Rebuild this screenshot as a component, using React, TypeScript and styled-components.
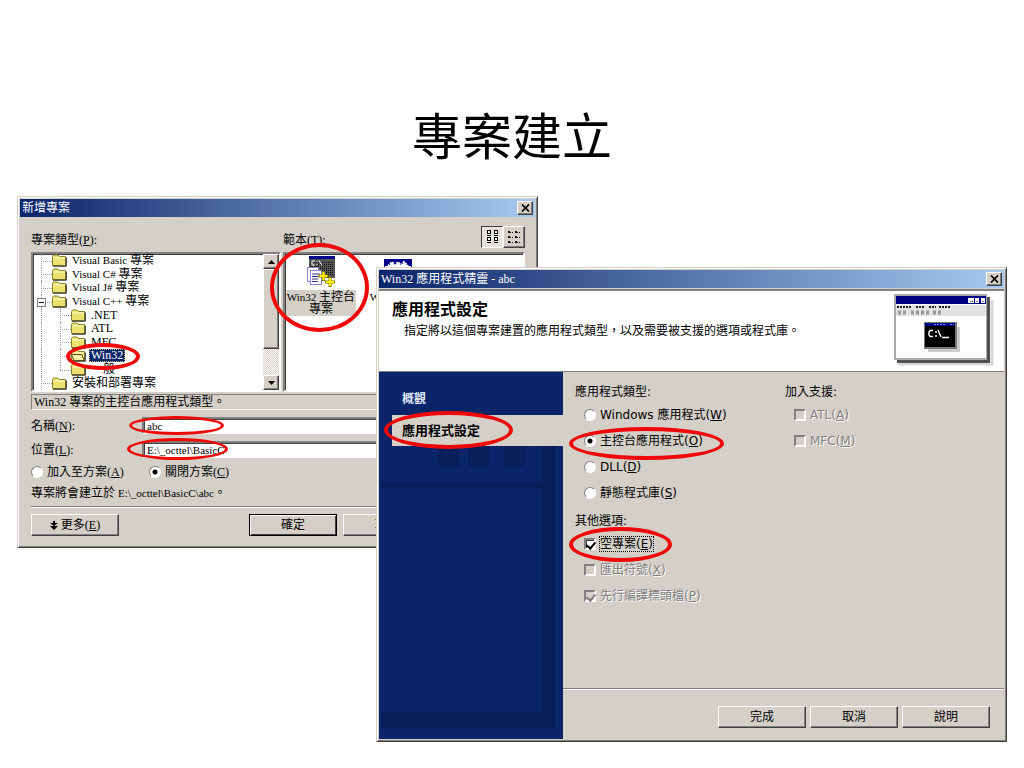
import React from "react";
import styled, { createGlobalStyle, css } from "styled-components";

const face = "#d4d0c8";
const navy = "#0a246a";
const shadow = "#808080";
const dark = "#404040";
const red = "#f00808";

const serif = `"Liberation Serif", "Noto Sans CJK TC", serif`;
const sans = `"DejaVu Sans", "Noto Sans CJK TC", sans-serif`;
const cjk = `"Noto Sans CJK TC", sans-serif`;

const GlobalStyle = createGlobalStyle`
  * { box-sizing: border-box; }
  body { margin: 0; background: #fff; color: #000; }
  button, input { font: inherit; color: inherit; margin: 0; }
  ul { list-style: none; margin: 0; padding: 0; }
  fieldset { border: 0; margin: 0; padding: 0; min-width: 0; }
  legend { padding: 0; }
`;

const raised = css`
  border: 1px solid;
  border-color: #fff ${dark} ${dark} #fff;
  box-shadow: inset -1px -1px 0 ${shadow};
`;

const sunken = css`
  border: 2px solid;
  border-color: ${shadow} #fff #fff ${shadow};
  box-shadow: inset 1px 1px 0 ${dark};
`;

const Slide = styled.main`
  position: relative;
  min-height: 768px;
  overflow: hidden;
`;

const SlideTitle = styled.h1`
  margin: 0;
  padding-top: 103px;
  font: 400 50px/60px ${cjk};
  text-align: center;
`;

const Window = styled.section<{ $latin: string }>`
  position: absolute;
  background: ${face};
  border: 1px solid;
  border-color: ${face} ${dark} ${dark} ${face};
  box-shadow: inset 1px 1px 0 #fff, inset -1px -1px 0 ${shadow};
  padding: 2px;
  font: 12px/14px ${(p) => p.$latin};
`;

const ProjectWindow = styled(Window)`
  top: 196px;
  left: 17px;
  width: calc(50% + 9px);
`;

const WizardWindow = styled(Window)`
  top: 267px;
  left: calc(50% - 136px);
  right: 17px;
`;

const TitleBar = styled.header`
  display: flex;
  align-items: center;
  justify-content: space-between;
  height: 18px;
  padding: 0 2px;
  background: linear-gradient(to right, ${navy}, #a6caf0);
  color: #fff;
  font-family: ${serif};
`;

const TitleText = styled.h2`
  margin: 0;
  font-size: 12px;
  font-weight: 400;
`;

const CloseButton = styled.button`
  ${raised}
  display: grid;
  place-items: center;
  width: 16px;
  height: 14px;
  padding: 0;
  background: ${face};
  color: #000;
`;

const Ring = styled.span<{ $box: [number, number, number, number]; $thick?: number }>`
  position: absolute;
  z-index: 2;
  left: ${(p) => p.$box[0]}px;
  top: ${(p) => p.$box[1]}px;
  width: ${(p) => p.$box[2]}px;
  height: ${(p) => p.$box[3]}px;
  border: ${(p) => p.$thick ?? 3}px solid ${red};
  border-radius: 50%;
  pointer-events: none;
`;

const Latin = styled.span`
  font-size: 11px;
`;

const PushButton = styled.button<{ $primary?: boolean }>`
  ${raised}
  width: 88px;
  height: 22px;
  padding: 0;
  background: ${face};
  white-space: nowrap;
  ${(p) => p.$primary && css`border-color: #000; box-shadow: inset 1px 1px 0 #fff, inset -1px -1px 0 ${dark};`}
`;

const Divider = styled.hr`
  width: 100%;
  height: 2px;
  margin: 0;
  border: 0;
  border-top: 1px solid ${shadow};
  border-bottom: 1px solid #fff;
`;

/* New project dialog */

const ProjectBody = styled.div`
  display: flex;
  flex-direction: column;
  padding: 9px 10px 9px 11px;
`;

const Panes = styled.div`
  display: grid;
  grid-template-columns: 250px 1fr;
  grid-template-rows: 22px 140px;
  gap: 4px 2px;
`;

const PaneLabel = styled.div`
  display: flex;
  align-items: center;
  justify-content: space-between;
  padding-top: 5px;
`;

const ViewButtons = styled.div`
  display: flex;
  margin-top: -5px;
`;

const ViewButton = styled.button<{ $pressed?: boolean }>`
  ${raised}
  display: grid;
  place-items: center;
  width: 22px;
  height: 22px;
  padding: 0;
  background: ${face};
  ${(p) => p.$pressed && css`background: #e6e3de; border-color: ${dark} #fff #fff ${dark}; box-shadow: none;`}
`;

const ListBox = styled.div`
  ${sunken}
  display: flex;
  background: #fff;
`;

const Tree = styled.ul`
  display: grid;
  flex: 1;
  grid-auto-rows: 1fr;
`;

const TreeRow = styled.li`
  position: relative;
  display: flex;
  align-items: center;
  min-height: 0;
  font-family: ${serif};
  line-height: 13px;
`;

const Guide = styled.span<{ $branch?: boolean; $half?: boolean }>`
  position: relative;
  align-self: stretch;
  width: 19px;
  &::before {
    content: "";
    position: absolute;
    left: 8px;
    top: 0;
    height: ${(p) => (p.$half ? "50%" : "100%")};
    border-left: 1px dotted #a0a0a0;
  }
  &::after {
    content: "";
    display: ${(p) => (p.$branch ? "block" : "none")};
    position: absolute;
    left: 8px;
    right: 0;
    top: 50%;
    border-top: 1px dotted #a0a0a0;
  }
`;

const Expander = styled.button`
  position: absolute;
  z-index: 1;
  left: 4px;
  top: 3px;
  width: 9px;
  height: 9px;
  padding: 0;
  border: 1px solid ${shadow};
  background: linear-gradient(#000, #000) center / 5px 1px no-repeat #fff;
`;

const TreeLabel = styled.span<{ $selected?: boolean }>`
  margin-left: 3px;
  padding: 0 2px;
  white-space: nowrap;
  ${(p) => p.$selected && css`background: ${navy}; color: #fff; outline: 1px dotted #c0b070; outline-offset: -1px;`}
`;

const ScrollBar = styled.div`
  display: flex;
  flex-direction: column;
  width: 16px;
  background: repeating-conic-gradient(#fff 0 25%, ${face} 0 50%) 0 0 / 2px 2px;
`;

const ScrollButton = styled.button`
  ${raised}
  display: grid;
  place-items: center;
  width: 16px;
  height: 15px;
  padding: 0;
  background: ${face};
`;

const ScrollThumb = styled.div`
  ${raised}
  height: 80px;
  margin-bottom: auto;
  background: ${face};
`;

const Templates = styled.ul`
  display: flex;
  gap: 5px;
  font-family: ${serif};
`;

const Template = styled.li`
  position: relative;
  display: flex;
  flex-direction: column;
  align-items: center;
  gap: 2px;
  width: 72px;
  padding-top: 2px;
  line-height: 12px;
  text-align: center;
  white-space: nowrap;
`;

const TemplateLabel = styled.span<{ $selected?: boolean }>`
  padding: 1px;
  background: ${(p) => (p.$selected ? face : "transparent")};
`;

const Hint = styled.p`
  height: 16px;
  margin: 2px 0 7px;
  padding: 0 2px;
  border: 1px solid;
  border-color: ${shadow} #fff #fff ${shadow};
  line-height: 14px;
`;

const Field = styled.div`
  position: relative;
  display: grid;
  grid-template-columns: 111px 1fr;
  align-items: center;
  margin-bottom: 7px;
`;

const TextInput = styled.input`
  ${sunken}
  width: 100%;
  height: 17px;
  padding: 0 3px;
  background: #fff;
  font-size: 11px;
  outline: 0;
`;

const RadioRow = styled.div`
  display: grid;
  grid-template-columns: 118px 1fr;
  padding-bottom: 7px;
`;

const PathText = styled.p`
  margin: 0 0 6px;
`;

const ProjectButtons = styled.div`
  display: flex;
  padding-top: 6px;
`;

const MoreButton = styled(PushButton)`
  display: flex;
  align-items: center;
  justify-content: center;
  gap: 3px;
  margin-right: auto;
`;

const Trailing = styled.div`
  display: flex;
  gap: 6px;
`;

/* Shared option controls */

const Option = styled.label<{ $off?: boolean }>`
  position: relative;
  display: flex;
  align-items: center;
  gap: 4px;
  white-space: nowrap;
  ${(p) => p.$off && css`color: ${shadow}; text-shadow: 1px 1px 0 #fff;`}
`;

const Radio = styled.input.attrs({ type: "radio" })`
  appearance: none;
  flex: none;
  width: 12px;
  height: 12px;
  border: 1px solid;
  border-color: ${shadow} #fff #fff ${shadow};
  border-radius: 50%;
  background: #fff;
  &:checked { background: radial-gradient(circle, #000 0 2px, #fff 3px); }
`;

const Check = styled.input.attrs({ type: "checkbox" })`
  appearance: none;
  ${sunken}
  position: relative;
  flex: none;
  width: 12px;
  height: 12px;
  background: #fff;
  &:disabled { background: ${face}; box-shadow: none; }
  &:checked::after {
    content: "";
    position: absolute;
    left: 2px;
    top: 0;
    width: 4px;
    height: 7px;
    border: solid #000;
    border-width: 0 2px 2px 0;
    transform: rotate(40deg);
  }
  &:disabled:checked::after { border-color: ${shadow}; }
`;

const Focused = styled.span`
  outline: 1px dotted #000;
`;

/* Wizard dialog */

const WizardHeader = styled.div`
  display: flex;
  justify-content: space-between;
  height: 82px;
  margin-top: 1px;
  padding: 3px 10px 0 13px;
  border-top: 2px solid ${shadow};
  background: #fff;
`;

const WizardHeading = styled.h3`
  margin: 0;
  padding-top: 4px;
  font: 700 16px/20px ${cjk};
`;

const WizardIntro = styled.p`
  margin: 6px 0 0 12px;
  white-space: nowrap;
`;

const WizardBody = styled.div`
  display: grid;
  grid-template-columns: 184px 1fr;
  border-top: 1px solid ${shadow};
  height: 368px;
`;

const Sidebar = styled.nav`
  position: relative;
  display: flex;
  flex-direction: column;
  padding: 11px 0 0 13px;
  background: ${navy};
`;

const SidebarArt = styled.svg`
  position: absolute;
  left: 0;
  top: 0;
`;

const Step = styled.a<{ $active?: boolean }>`
  position: relative;
  display: block;
  height: 32px;
  padding-left: 10px;
  font: 700 12px/30px ${cjk};
  color: #dfe6fa;
  text-decoration: none;
  ${(p) => p.$active && css`height: 31px; font-size: 13px; background: ${face}; color: #000;`}
`;

const WizardMain = styled.div`
  display: flex;
  flex-direction: column;
`;

const OptionColumns = styled.div`
  display: grid;
  grid-template-columns: 210px 1fr;
  align-items: start;
  padding: 13px 12px 0;
`;

const OptionList = styled.div`
  display: grid;
  grid-auto-rows: 26px;
  align-items: center;
  padding-left: 9px;
`;

const Group = styled.fieldset<{ $second?: boolean }>`
  margin-top: ${(p) => (p.$second ? 8 : 0)}px;
`;

const GroupLegend = styled.legend`
  height: 17px;
  line-height: 14px;
`;

const WizardFooter = styled.footer`
  display: flex;
  justify-content: flex-end;
  gap: 4px;
  padding: 16px 14px 11px 0;
`;

const FooterRule = styled(Divider)`
  margin-top: auto;
`;

function CloseIcon() {
  return (
    <svg width="9" height="8" viewBox="0 0 9 8" aria-hidden="true">
      <path d="M1 0.5 8 7.5M8 0.5 1 7.5" stroke="#000" strokeWidth="1.7" />
    </svg>
  );
}

function Folder({ open }: { open?: boolean }) {
  return (
    <svg width="15" height="13" viewBox="0 0 15 13" aria-hidden="true">
      <path d="M0.5 11.5V2.5L1.5 1H6L7.5 2.5H13.5V11.5Z" fill="#ece070" stroke="#8a8428" />
      <path d="M1.5 4H13" stroke="#fffbd0" />
      <path d="M1 12.2H14.3V3.5" fill="none" stroke="#222" />
      {open && <path d="M0.5 5.5H10.5L13.5 11.5H3Z" fill="#f8f0a8" stroke="#555020" />}
    </svg>
  );
}

function ConsoleIcon() {
  return (
    <svg width="30" height="32" viewBox="0 0 30 32" aria-hidden="true">
      <rect x="3" y="0" width="26" height="22" fill="#555" />
      <path d="M4 6.5H28M4 8.5H28M4 10.5H28M4 12.5H28M4 14.5H28M4 16.5H28M4 18.5H28" stroke="#111" strokeDasharray="1 1" />
      <rect x="3" y="0" width="26" height="3" fill="#00008b" />
      <path d="M9 5H6V9H9M11 5V6M11 8V9M13 4.5 16 9.5" fill="none" stroke="#fff" />
      <g stroke="#8484c8" fill="#fff">
        <rect x="1.5" y="11.5" width="11" height="14" />
        <rect x="4.5" y="14.5" width="11" height="14" />
      </g>
      <path d="M6 18H14M6 20.5H13M6 23H12M6 25.5H12" stroke="#303080" />
      <path d="M17.5 15V25M12.5 20H22.5M24 21V31M19 26H29" stroke="#807800" strokeWidth="3" />
      <path d="M17.5 16V24M13.5 20H21.5M24 22V30M20 26H28" stroke="#fff200" strokeWidth="2" />
    </svg>
  );
}

function AppIcon() {
  return (
    <svg width="28" height="32" viewBox="0 0 28 32" aria-hidden="true">
      <rect x="0.5" y="4.5" width="27" height="22" fill="#fff" stroke="#00008b" />
      <rect x="0" y="3" width="28" height="3" fill="#00008b" />
      <path d="M0 10V6H28V10H24L20 6 17 10 14 6 11 10 8 6 5 10Z" fill="#00008b" />
      <path d="M4 10 8 6 11 9 14 6 17 9 20 6 24 10" fill="none" stroke="#fff" strokeWidth="2" strokeDasharray="2 1" />
    </svg>
  );
}

function LargeIconsGlyph() {
  const spots = [[1, 1], [8, 1], [1, 8], [8, 8]];
  return (
    <svg width="13" height="14" viewBox="0 0 13 14" aria-hidden="true">
      {spots.map(([x, y]) => (
        <g key={`${x}-${y}`}>
          <rect x={x + 0.5} y={y - 0.5} width="3" height="3" fill="#fff" stroke="#000" />
          <path d={`M${x} ${y + 4.5}h4`} stroke="#000" />
        </g>
      ))}
    </svg>
  );
}

function SmallIconsGlyph() {
  return (
    <svg width="14" height="13" viewBox="0 0 14 13" aria-hidden="true">
      {[1, 6, 11].map((y) => (
        <g key={y} stroke="#111">
          <path d={`M1 ${y - 0.5}h2M8 ${y - 0.5}h2`} />
          <path d={`M1 ${y + 0.5}h5M8 ${y + 0.5}h5`} strokeDasharray="3 1" />
        </g>
      ))}
    </svg>
  );
}

function Arrow({ down }: { down?: boolean }) {
  return (
    <svg width="7" height="4" viewBox="0 0 7 4" aria-hidden="true">
      <path d={down ? "M0 0H7L3.5 4Z" : "M0 4H7L3.5 0Z"} />
    </svg>
  );
}

function MoreIcon() {
  return (
    <svg width="8" height="9" viewBox="0 0 8 9" aria-hidden="true">
      <path d="M3 0H5V2H8L4 5 0 2H3ZM0 5H8L4 9Z" />
    </svg>
  );
}

function WizardPicture() {
  return (
    <svg width="100" height="72" viewBox="0 0 100 72" aria-hidden="true">
      <path d="M4 70H98V6" fill="none" stroke="#d8d8d8" strokeWidth="3" />
      <rect x="3" y="3" width="93" height="66" fill="#505050" />
      <rect x="0" y="0" width="93" height="66" fill="#aaa" />
      <rect x="2" y="2" width="90" height="62" fill="#fff" />
      <rect x="2" y="2" width="90" height="8" fill="#000084" />
      <path d="M74 4h6v5h-6zM81 4h4v5h-4zM87 4h4v5h-4z" fill="#fff" />
      <path d="M76 7.5h3M82 7.5h2M88 7.5h2" stroke="#777" />
      <rect x="2" y="11" width="90" height="11" fill="#e2e2e2" />
      <path d="M3 13H18M22 13H31M35 13H42M45 13H57" stroke="#222" strokeWidth="2" strokeDasharray="2 1" />
      <path d="M4 18.5H14M17 18.5H35M39 18.5H48" stroke="#999" strokeWidth="4" strokeDasharray="3 2" />
      <path d="M34 56H64V33" fill="none" stroke="#ccc" strokeWidth="4" />
      <rect x="30" y="28" width="33" height="27" fill="#777" />
      <rect x="31" y="29" width="30" height="24" fill="#000" />
      <rect x="31" y="29" width="30" height="3" fill="#000084" />
      <path d="M40 30.5H52M56 30.5H60" stroke="#6f8cff" strokeDasharray="2 1" />
      <path d="M39 36.5H36L35 38V41L36 42.5H39M42 37V39M42 41V43M44 36 47 43M48 43.5H55" fill="none" stroke="#fff" strokeWidth="1.4" />
    </svg>
  );
}

function SidebarPattern() {
  return (
    <SidebarArt width="184" height="367" viewBox="0 0 184 367" aria-hidden="true">
      <defs>
        <pattern id="weave" width="2" height="2" patternUnits="userSpaceOnUse">
          <rect width="2" height="2" fill="#081c58" />
          <rect width="1" height="1" fill="#0a246a" />
        </pattern>
      </defs>
      <g fill="url(#weave)">
        <rect x="58" y="74" width="22" height="21" />
        <rect x="89" y="74" width="22" height="21" />
        <rect x="124" y="74" width="23" height="21" />
        <rect x="2" y="110" width="160" height="7" />
        <rect x="162" y="74" width="14" height="282" />
        <rect x="2" y="340" width="160" height="16" />
      </g>
      <path d="M175.5 74V356" stroke="#06174a" />
    </SidebarArt>
  );
}

type Node = { name?: string; title?: string; level: 0 | 1; expanded?: boolean; selected?: boolean; last?: boolean };

const nodes: Node[] = [
  { name: "Visual Basic ", title: "專案", level: 0 },
  { name: "Visual C# ", title: "專案", level: 0 },
  { name: "Visual J# ", title: "專案", level: 0 },
  { name: "Visual C++ ", title: "專案", level: 0, expanded: true },
  { name: ".NET", level: 1 },
  { name: "ATL", level: 1 },
  { name: "MFC", level: 1 },
  { name: "Win32", level: 1, selected: true },
  { title: "一般", level: 1, last: true },
  { title: "安裝和部署專案", level: 0 },
];

function Key({ children }: { children: string }) {
  return <span>(<u>{children}</u>)</span>;
}

function NewProject() {
  return (
    <ProjectWindow $latin={serif} aria-label="新增專案">
      <TitleBar>
        <TitleText>新增專案</TitleText>
        <CloseButton aria-label="關閉"><CloseIcon /></CloseButton>
      </TitleBar>
      <ProjectBody>
        <Panes>
          <PaneLabel><span>專案類型<Key>P</Key>:</span></PaneLabel>
          <PaneLabel>
            <span>範本<Key>T</Key>:</span>
            <ViewButtons>
              <ViewButton $pressed aria-label="大圖示"><LargeIconsGlyph /></ViewButton>
              <ViewButton aria-label="小圖示"><SmallIconsGlyph /></ViewButton>
            </ViewButtons>
          </PaneLabel>
          <ListBox>
            <Tree role="tree">
              {nodes.map((n, i) => (
                <TreeRow key={i} role="treeitem" aria-selected={!!n.selected}>
                  {n.expanded && <Expander aria-label="摺疊" />}
                  <Guide $branch={n.level === 0} />
                  {n.level === 1 && <Guide $branch $half={n.last} />}
                  <Folder open={n.selected} />
                  <TreeLabel $selected={n.selected}>
                    {n.name && (n.level === 0 ? <Latin>{n.name}</Latin> : n.name)}
                    {n.title}
                  </TreeLabel>
                  {n.selected && <Ring $box={[33, -6, 74, 27]} $thick={4} />}
                </TreeRow>
              ))}
            </Tree>
            <ScrollBar>
              <ScrollButton aria-label="向上"><Arrow /></ScrollButton>
              <ScrollThumb />
              <ScrollButton aria-label="向下"><Arrow down /></ScrollButton>
            </ScrollBar>
          </ListBox>
          <ListBox>
            <Templates>
              <Template>
                <ConsoleIcon />
                <TemplateLabel $selected><Latin>Win32 </Latin>主控台<br />專案</TemplateLabel>
                <Ring $box={[-15, -11, 99, 89]} $thick={4} />
              </Template>
              <Template>
                <AppIcon />
                <TemplateLabel><Latin>Win32 </Latin>專案</TemplateLabel>
              </Template>
            </Templates>
          </ListBox>
        </Panes>
        <Hint>Win32 專案的主控台應用程式類型。</Hint>
        <Field>
          <label htmlFor="name">名稱<Key>N</Key>:</label>
          <TextInput id="name" defaultValue="abc" />
          <Ring $box={[98, -1, 95, 19]} />
        </Field>
        <Field>
          <label htmlFor="place">位置<Key>L</Key>:</label>
          <TextInput id="place" defaultValue="E:\_octtel\BasicC" />
          <Ring $box={[96, -3, 101, 22]} />
        </Field>
        <RadioRow>
          <Option><Radio name="solution" /><span>加入至方案<Key>A</Key></span></Option>
          <Option><Radio name="solution" defaultChecked /><span>關閉方案<Key>C</Key></span></Option>
        </RadioRow>
        <PathText>專案將會建立於 <Latin>E:\_octtel\BasicC\abc</Latin>。</PathText>
        <Divider />
        <ProjectButtons>
          <MoreButton><MoreIcon /><span>更多<Key>E</Key></span></MoreButton>
          <Trailing>
            <PushButton $primary>確定</PushButton>
            <PushButton>取消</PushButton>
            <PushButton>說明</PushButton>
          </Trailing>
        </ProjectButtons>
      </ProjectBody>
    </ProjectWindow>
  );
}

function Wizard() {
  return (
    <WizardWindow $latin={sans} aria-label="Win32 應用程式精靈">
      <TitleBar>
        <TitleText>Win32 應用程式精靈 - abc</TitleText>
        <CloseButton aria-label="關閉"><CloseIcon /></CloseButton>
      </TitleBar>
      <WizardHeader>
        <div>
          <WizardHeading>應用程式設定</WizardHeading>
          <WizardIntro>指定將以這個專案建置的應用程式類型，以及需要被支援的選項或程式庫。</WizardIntro>
        </div>
        <WizardPicture />
      </WizardHeader>
      <WizardBody>
        <Sidebar>
          <SidebarPattern />
          <Step href="#overview">概觀</Step>
          <Step href="#settings" $active>
            應用程式設定
            <Ring $box={[-8, -4, 129, 38]} $thick={4} />
          </Step>
        </Sidebar>
        <WizardMain>
          <OptionColumns>
            <Group>
              <GroupLegend>應用程式類型:</GroupLegend>
              <OptionList>
                <Option><Radio name="type" /><span>Windows 應用程式<Key>W</Key></span></Option>
                <Option>
                  <Radio name="type" defaultChecked /><span>主控台應用程式<Key>O</Key></span>
                  <Ring $box={[-15, -7, 155, 33]} $thick={4} />
                </Option>
                <Option><Radio name="type" /><span>DLL<Key>D</Key></span></Option>
                <Option><Radio name="type" /><span>靜態程式庫<Key>S</Key></span></Option>
              </OptionList>
            </Group>
            <Group>
              <GroupLegend>加入支援:</GroupLegend>
              <OptionList>
                <Option $off><Check disabled /><span>ATL<Key>A</Key></span></Option>
                <Option $off><Check disabled /><span>MFC<Key>M</Key></span></Option>
              </OptionList>
            </Group>
            <Group $second>
              <GroupLegend>其他選項:</GroupLegend>
              <OptionList>
                <Option>
                  <Check defaultChecked /><Focused>空專案<Key>E</Key></Focused>
                  <Ring $box={[-15, -10, 103, 35]} $thick={4} />
                </Option>
                <Option $off><Check disabled /><span>匯出符號<Key>X</Key></span></Option>
                <Option $off><Check disabled defaultChecked /><span>先行編譯標頭檔<Key>P</Key></span></Option>
              </OptionList>
            </Group>
          </OptionColumns>
          <FooterRule />
          <WizardFooter>
            <PushButton>完成</PushButton>
            <PushButton>取消</PushButton>
            <PushButton>說明</PushButton>
          </WizardFooter>
        </WizardMain>
      </WizardBody>
    </WizardWindow>
  );
}

export default function App() {
  return (
    <Slide>
      <GlobalStyle />
      <SlideTitle>專案建立</SlideTitle>
      <NewProject />
      <Wizard />
    </Slide>
  );
}
